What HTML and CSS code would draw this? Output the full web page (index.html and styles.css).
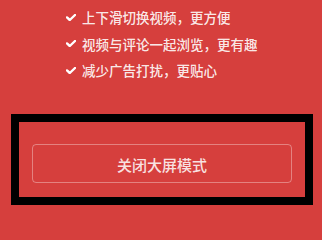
FILE: index.html
```html
<!DOCTYPE html>
<html lang="zh-CN">
<head>
<meta charset="utf-8">
<title>大屏模式</title>
<link rel="stylesheet" href="styles.css">
</head>
<body>
<ul class="features">
  <li><svg class="check" viewBox="0 0 10 7" width="10" height="7"><polyline points="1,3.4 3.8,6 9,1" /></svg><span>上下滑切换视频，更方便</span></li>
  <li><svg class="check" viewBox="0 0 10 7" width="10" height="7"><polyline points="1,3.4 3.8,6 9,1" /></svg><span>视频与评论一起浏览，更有趣</span></li>
  <li><svg class="check" viewBox="0 0 10 7" width="10" height="7"><polyline points="1,3.4 3.8,6 9,1" /></svg><span>减少广告打扰，更贴心</span></li>
</ul>
<div class="frame">
  <button class="close-btn">关闭大屏模式</button>
</div>
</body>
</html>
```

FILE: styles.css
```css
html, body {
  margin: 0;
  padding: 0;
  background: #d63f3d;
  width: 322px;
  height: 210px;
  overflow: hidden;
  font-family: "Noto Sans CJK SC", "Noto Sans", sans-serif;
}

.features {
  list-style: none;
  margin: 0;
  padding: 4px 0 0 66px;
}

.features li {
  display: flex;
  align-items: center;
  height: 26.5px;
  color: rgba(255, 255, 255, 0.9);
  font-size: 13.5px;
  font-weight: 500;
}

.check {
  flex: none;
  margin-right: 6px;
}

.check polyline {
  fill: none;
  stroke: #fff;
  stroke-width: 2.4;
  stroke-linecap: round;
  stroke-linejoin: round;
}

.frame {
  margin: 30.5px 9px 0 11px;
  border: 8px solid #000;
  padding: 22px 13px 14px 13px;
}

.close-btn {
  display: block;
  width: 100%;
  height: 39px;
  box-sizing: border-box;
  background: transparent;
  border: 1px solid rgba(255, 255, 255, 0.35);
  border-radius: 4px;
  color: rgba(255, 255, 255, 0.85);
  font-family: "Noto Sans CJK SC", "Noto Sans", sans-serif;
  font-size: 15px;
  font-weight: 500;
  padding: 0;
  padding-top: 1px;
}
```
